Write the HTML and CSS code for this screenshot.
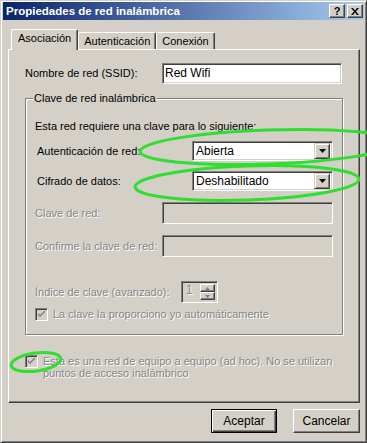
FILE: index.html
```html
<!DOCTYPE html>
<html lang="es">
<head>
  <meta charset="UTF-8">
  <title>Propiedades de red inalámbrica</title>
  <link rel="stylesheet" href="styles.css">
</head>
<body>
  <div class="window">
    <div class="titlebar">
      <span class="title">Propiedades de red inalámbrica</span>
      <span class="caption-btns">
        <span class="cap-btn help">?</span>
        <span class="cap-btn">
          <svg width="8" height="7" viewBox="0 0 8 7"><path d="M0 0h2l2 2.5L6 0h2L5 3.5 8 7H6L4 4.5 2 7H0l3-3.5z" fill="#000"/></svg>
        </span>
      </span>
    </div>

    <div class="client">
      <div class="tabs">
        <span class="tab active">Asociación</span>
        <span class="tab">Autenticación</span>
        <span class="tab">Conexión</span>
      </div>

      <div class="panel">
        <div class="row ssid">
          <label class="lbl">Nombre de red (SSID):</label>
          <div class="field wide">Red Wifi</div>
        </div>

        <fieldset class="group">
          <legend>Clave de red inalámbrica</legend>
          <div class="group-body">
            <p class="intro">Esta red requiere una clave para lo siguiente:</p>

            <div class="row combo-row first">
              <label class="lbl">Autenticación de red:</label>
              <div class="combo">
                <span class="combo-text">Abierta</span>
                <span class="drop-btn"><svg width="7" height="4" viewBox="0 0 7 4"><path d="M0 0h7L3.5 4z" fill="#000"/></svg></span>
              </div>
            </div>

            <div class="row combo-row">
              <label class="lbl">Cifrado de datos:</label>
              <div class="combo">
                <span class="combo-text">Deshabilitado</span>
                <span class="drop-btn"><svg width="7" height="4" viewBox="0 0 7 4"><path d="M0 0h7L3.5 4z" fill="#000"/></svg></span>
              </div>
            </div>

            <div class="row key-row first-key">
              <label class="lbl disabled">Clave de red:</label>
              <div class="field off"></div>
            </div>

            <div class="row key-row">
              <label class="lbl disabled">Confirme la clave de red:</label>
              <div class="field off"></div>
            </div>

            <div class="row spin-row">
              <label class="lbl disabled">Índice de clave (avanzado):</label>
              <div class="spinner">
                <span class="spin-val">1</span>
                <span class="spin-btns">
                  <span class="spin-btn"><svg width="5" height="3" viewBox="0 0 5 3"><path d="M2.5 0L5 3H0z" fill="#808080"/></svg></span>
                  <span class="spin-btn"><svg width="5" height="3" viewBox="0 0 5 3"><path d="M0 0h5L2.5 3z" fill="#808080"/></svg></span>
                </span>
              </div>
            </div>

            <div class="check-row auto">
              <span class="checkbox"><svg width="7" height="7" viewBox="0 0 7 7"><path d="M0 2l2 2 5-5v2L2 6 0 4z" fill="#808080"/></svg></span>
              <span class="disabled">La clave la proporciono yo automáticamente</span>
            </div>
          </div>
        </fieldset>

        <div class="check-row adhoc">
          <span class="checkbox"><svg width="7" height="7" viewBox="0 0 7 7"><path d="M0 2l2 2 5-5v2L2 6 0 4z" fill="#808080"/></svg></span>
          <span class="disabled">Esta es una red de equipo a equipo (ad hoc). No se utilizan puntos de acceso inalámbrico</span>
        </div>
      </div>

      <div class="buttons">
        <span class="btn default">Aceptar</span>
        <span class="btn">Cancelar</span>
      </div>
    </div>

    <svg class="marks" width="367" height="443" viewBox="0 0 367 443">
      <ellipse cx="267" cy="146" rx="128" ry="17" transform="rotate(-2 267 146)"/>
      <ellipse cx="246" cy="182" rx="112" ry="17" transform="rotate(-2 246 182)"/>
      <ellipse cx="35" cy="361" rx="25" ry="9" transform="rotate(-8 35 361)"/>
    </svg>
  </div>
</body>
</html>
```

FILE: styles.css
```css
* {
  box-sizing: border-box;
}
body {
  margin: 0;
  background: #d4d0c8;
  font-family: "Liberation Sans", Arial, sans-serif;
  font-size: 11px;
  line-height: 13px;
  color: #000;
}
.window {
  position: relative;
  width: 367px;
  height: 443px;
  background: #d4d0c8;
  border: 1px solid;
  border-color: #d4d0c8 #404040 #404040 #d4d0c8;
  box-shadow: inset 1px 1px 0 #fff, inset -1px -1px 0 #808080;
  padding: 1px 2px 2px 2px;
  display: flex;
  flex-direction: column;
}

/* title bar */
.titlebar {
  height: 18px;
  display: flex;
  align-items: center;
  justify-content: space-between;
  padding: 0 1px 0 3px;
  background: linear-gradient(to right, #0a246a, #a6caf0);
}
.title {
  color: #fff;
  font-weight: bold;
  font-size: 11.5px;
}
.caption-btns {
  display: flex;
  gap: 2px;
}
.cap-btn {
  width: 16px;
  height: 14px;
  display: flex;
  align-items: center;
  justify-content: center;
  background: #d4d0c8;
  border: 1px solid;
  border-color: #fff #404040 #404040 #fff;
  box-shadow: inset -1px -1px 0 #808080;
  font-weight: bold;
  font-size: 11px;
  line-height: 11px;
}

/* client area */
.client {
  flex: 1;
  display: flex;
  flex-direction: column;
  padding: 9px 4px 0 5px;
}
.tabs {
  display: flex;
  align-items: flex-start;
  height: 21px;
  margin-bottom: -1px;
  padding-left: 3px;
  position: relative;
  z-index: 1;
}
.tab {
  height: 17px;
  margin-top: 3px;
  padding: 0 5px;
  display: flex;
  align-items: center;
  background: #d4d0c8;
  border-top: 1px solid #fff;
  border-left: 1px solid #fff;
  border-right: 1px solid #404040;
  box-shadow: inset -1px 0 0 #808080;
  border-radius: 2px 2px 0 0;
}
.tab.active {
  height: 21px;
  margin-top: 0;
  padding: 0 6px 3px;
}
.panel {
  width: 352px;
  height: 354px;
  border: 1px solid;
  border-color: #fff #404040 #404040 #fff;
  box-shadow: inset -1px -1px 0 #808080;
  padding: 13px 0 0 16px;
}

/* rows */
.row {
  display: flex;
  align-items: center;
}
.lbl {
  flex: none;
}
.ssid .lbl {
  width: 137px;
}
.field {
  height: 22px;
  padding: 3px 2px;
  background: #fff;
  border: 1px solid;
  border-color: #808080 #fff #fff #808080;
  box-shadow: inset 1px 1px 0 #404040, inset -1px -1px 0 #d4d0c8;
}
.field.wide {
  width: 180px;
  height: 21px;
  font-size: 12px;
}
.field.off {
  width: 171px;
  background: #d4d0c8;
}
.disabled {
  color: #868686;
  text-shadow: 1px 1px 0 #fff;
}

/* group box */
.group {
  width: 317px;
  margin: 8px 0 0;
  padding: 0;
  border: 1px solid #808080;
  box-shadow: inset 1px 1px 0 #fff, 1px 1px 0 #fff;
}
.group legend {
  margin-left: 7px;
  padding: 0 1px;
  background: #d4d0c8;
}
.group-body {
  padding: 15px 9px 13px 9px;
}
.intro {
  margin: 0;
}
.combo-row {
  margin-top: 10px;
}
.combo-row.first {
  margin-top: 8px;
}
.combo-row .lbl {
  width: 157px;
  padding-left: 2px;
}
.combo {
  width: 141px;
  height: 20px;
  display: flex;
  align-items: center;
  justify-content: space-between;
  padding: 2px;
  background: #fff;
  border: 1px solid;
  border-color: #808080 #fff #fff #808080;
  box-shadow: inset 1px 1px 0 #404040, inset -1px -1px 0 #d4d0c8;
  font-size: 12px;
}
.combo-text {
  padding-left: 1px;
}
.drop-btn {
  width: 16px;
  height: 16px;
  display: flex;
  align-items: center;
  justify-content: center;
  background: #d4d0c8;
  border: 1px solid;
  border-color: #d4d0c8 #404040 #404040 #d4d0c8;
  box-shadow: inset 1px 1px 0 #fff, inset -1px -1px 0 #808080;
}
.key-row {
  margin-top: 11px;
}
.key-row .lbl {
  width: 127px;
}
.spin-row {
  margin-top: 24px;
}
.spin-row .lbl {
  width: 146px;
}
.spinner {
  width: 37px;
  height: 22px;
  display: flex;
  justify-content: space-between;
  padding: 2px;
  background: #d4d0c8;
  border: 1px solid;
  border-color: #808080 #fff #fff #808080;
  box-shadow: inset 1px 1px 0 #404040, inset -1px -1px 0 #d4d0c8;
}
.spin-val {
  padding-left: 2px;
  font-size: 12px;
  color: #868686;
  text-shadow: 1px 1px 0 #fff;
}
.spin-btns {
  display: flex;
  flex-direction: column;
}
.spin-btn {
  width: 15px;
  height: 9px;
  display: flex;
  align-items: center;
  justify-content: center;
  border: 1px solid;
  border-color: #fff #404040 #404040 #fff;
  box-shadow: inset -1px -1px 0 #808080;
}

/* checkboxes */
.check-row {
  display: flex;
  align-items: flex-start;
  gap: 5px;
}
.check-row.auto {
  margin-top: 5px;
}
.check-row.adhoc {
  margin-top: 20px;
  width: 318px;
  line-height: 12px;
}
.checkbox {
  flex: none;
  width: 13px;
  height: 13px;
  display: flex;
  align-items: center;
  justify-content: center;
  background: #d4d0c8;
  border: 1px solid;
  border-color: #808080 #fff #fff #808080;
  box-shadow: inset 1px 1px 0 #404040, inset -1px -1px 0 #d4d0c8;
}

/* dialog buttons */
.buttons {
  display: flex;
  justify-content: flex-end;
  gap: 16px;
  margin-top: 6px;
}
.btn {
  width: 67px;
  height: 24px;
  display: flex;
  align-items: center;
  justify-content: center;
  font-size: 12px;
  background: #d4d0c8;
  border: 1px solid;
  border-color: #fff #404040 #404040 #fff;
  box-shadow: inset -1px -1px 0 #808080;
}
.btn.default {
  width: 66px;
  border: 1px solid #000;
  box-shadow: inset 1px 1px 0 #fff, inset -1px -1px 0 #404040, inset -2px -2px 0 #808080;
}

/* green annotation marks drawn over the screenshot */
.marks {
  position: absolute;
  left: 0;
  top: 0;
  pointer-events: none;
}
.marks ellipse {
  fill: none;
  stroke: #2fdf2f;
  stroke-width: 3;
}
```
